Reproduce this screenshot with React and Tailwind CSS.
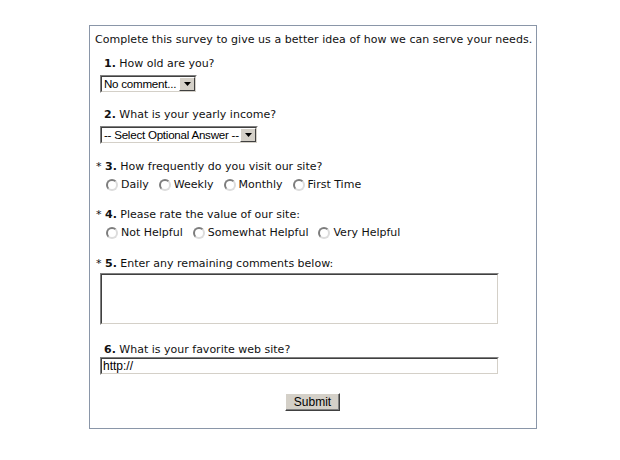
import React from "react";

const font = { fontFamily: '"DejaVu Sans", Verdana, sans-serif' };
const arial = { fontFamily: '"Liberation Sans", Arial, sans-serif' };

function Radio({ label, first }) {
  return (
    <span className={`flex items-center ${first ? "ml-[6px]" : "ml-[10px]"}`}>
      <span className="w-[12px] h-[12px] rounded-full bg-white border-2 border-t-[#7d7d7d] border-l-[#7d7d7d] border-b-[#dcdcdc] border-r-[#dcdcdc]" />
      <span className="ml-[3px]">{label}</span>
    </span>
  );
}

function Select({ text, width }) {
  return (
    <div
      className={`h-[18px] flex border border-t-[#808080] border-l-[#808080] border-b-white border-r-white ${width}`}
    >
      <div className="flex-1 flex border border-t-[#404040] border-l-[#404040] border-b-[#d4d0c8] border-r-[#d4d0c8] bg-white">
        <div
          className="flex-1 pl-[2px] text-[11.6px] leading-[14px] tracking-[-0.25px] text-black whitespace-nowrap overflow-hidden"
          style={arial}
        >
          {text}
        </div>
        <div className="w-[16px] h-[14px] bg-[#d4d0c8] border border-t-white border-l-white border-b-[#404040] border-r-[#404040] flex items-center justify-center">
          <svg width="7" height="4" viewBox="0 0 7 4">
            <path d="M0 0h7L3.5 4z" fill="#000" />
          </svg>
        </div>
      </div>
    </div>
  );
}

function Inset({ className, children }) {
  return (
    <div className={`border border-t-[#808080] border-l-[#808080] border-b-white border-r-white ${className}`}>
      <div className="h-full border border-t-[#404040] border-l-[#404040] border-b-[#d4d0c8] border-r-[#d4d0c8] bg-white">
        {children}
      </div>
    </div>
  );
}

function Label({ star, num, text, className }) {
  return (
    <div className={`leading-[14px] ${star ? "pl-[1px]" : "pl-[9px]"} ${className}`}>
      {star && <span>*&nbsp;</span>}
      <b>{num}.</b> {text}
    </div>
  );
}

export default function App() {
  return (
    <div className="w-[620px] h-[460px] bg-white text-[11px] text-[#111] pt-[25px]" style={font}>
      <div className="ml-[89px] w-[448px] h-[404px] border border-[#8a96a8] pt-[7px] pl-[5px] pr-[5px]">
        <div className="leading-[14px] whitespace-nowrap tracking-[0.04px]">
          Complete this survey to give us a better idea of how we can serve your needs.
        </div>

        <Label num="1" text="How old are you?" className="mt-[10px]" />
        <div className="mt-[4px] ml-[5px]">
          <Select text="No comment..." width="w-[97px]" />
        </div>

        <Label num="2" text="What is your yearly income?" className="mt-[15px]" />
        <div className="mt-[4px] ml-[5px]">
          <Select text="-- Select Optional Answer --" width="w-[158px]" />
        </div>

        <Label star num="3" text="How frequently do you visit our site?" className="mt-[16px]" />
        <div className="mt-[4px] flex items-center leading-[14px] pl-[5px]">
          <Radio first label="Daily" />
          <Radio label="Weekly" />
          <Radio label="Monthly" />
          <Radio label="First Time" />
        </div>

        <Label star num="4" text="Please rate the value of our site:" className="mt-[16px]" />
        <div className="mt-[4px] flex items-center leading-[14px] pl-[5px]">
          <Radio first label="Not Helpful" />
          <Radio label="Somewhat Helpful" />
          <Radio label="Very Helpful" />
        </div>

        <Label star num="5" text="Enter any remaining comments below:" className="mt-[17px]" />
        <div className="mt-[2px] ml-[5px]">
          <Inset className="w-[399px] h-[52px]" />
        </div>

        <Label num="6" text="What is your favorite web site?" className="mt-[18px]" />
        <div className="mt-[0px] ml-[5px]">
          <Inset className="w-[399px] h-[18px]">
            <div className="pl-[1px] text-[12px] leading-[14px] text-black" style={arial}>
              http://
            </div>
          </Inset>
        </div>

        <div className="mt-[18px] flex justify-center pr-[1px]">
          <button
            className="w-[55px] h-[18px] bg-[#d4d0c8] border border-t-white border-l-white border-b-[#404040] border-r-[#404040] text-[12px] leading-[14px] text-black"
            style={{ ...arial, boxShadow: "inset -1px -1px 0 #808080" }}
          >
            Submit
          </button>
        </div>
      </div>
    </div>
  );
}
